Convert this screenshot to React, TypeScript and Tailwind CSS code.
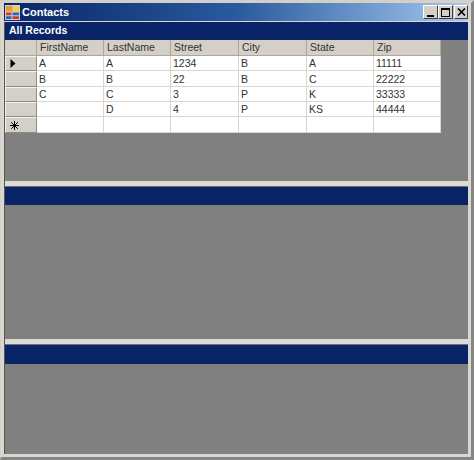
const F = { fontFamily: '"Liberation Sans", Tahoma, sans-serif' };

const columns = ["FirstName", "LastName", "Street", "City", "State", "Zip"];
const widths = ["w-[67px]", "w-[67px]", "w-[68px]", "w-[68px]", "w-[67px]", "w-[67px]"];
const rows = [
  { h: "h-[15px]", c: ["A", "A", "1234", "B", "A", "11111"], mark: "arrow" },
  { h: "h-[16px]", c: ["B", "B", "22", "B", "C", "22222"], mark: "" },
  { h: "h-[15px]", c: ["C", "C", "3", "P", "K", "33333"], mark: "" },
  { h: "h-[15px]", c: ["", "D", "4", "P", "KS", "44444"], mark: "" },
  { h: "h-[16px]", c: ["", "", "", "", "", ""], mark: "star" },
];

function Band({ text, h }: { text?: string; h: string }) {
  return (
    <div className={`${h} bg-[#0a246a] border-b border-[#10254f] flex items-center pl-[4px] text-[10.5px] font-bold text-white shrink-0`}>
      {text}
    </div>
  );
}

function Splitter() {
  return <div className="h-[6px] shrink-0 bg-[#dedbd4] border-b border-b-[#707070]" />;
}

export default function App() {
  return (
    <div className="w-[474px] h-[460px] bg-[#dad7d0] border-t-[3px] border-l border-r-[3px] border-b-[3px] border-t-[#d4d0c8] border-l-[#d4d0c8] border-r-[#858585] border-b-[#858585] flex flex-col overflow-hidden text-[#222]" style={F}>
      <div className="h-[18px] shrink-0 mx-[3px] flex items-center bg-gradient-to-r from-[#0a246a] via-[#2a5a9e] to-[#a6caf0] pl-[1px]">
        <svg width="15" height="15" viewBox="0 0 16 16" className="shrink-0">
          <rect x="0" y="0" width="16" height="16" fill="#d8d4c8" />
          <rect x="1" y="1" width="7" height="6" fill="#e0a030" />
          <rect x="9" y="2" width="6" height="5" fill="#f0d040" />
          <rect x="1" y="8" width="6" height="3" fill="#d04030" />
          <rect x="8" y="8" width="7" height="3" fill="#3060c0" />
          <rect x="1" y="12" width="6" height="3" fill="#3060c0" />
          <rect x="8" y="12" width="7" height="3" fill="#c04040" />
        </svg>
        <span className="ml-[2px] text-[11px] font-bold text-white leading-none">Contacts</span>
        <div className="ml-auto flex items-center">
          {["min", "max"].map((k) => (
            <div key={k} className="w-[15px] h-[14px] bg-[#d4d0c8] border border-t-white border-l-white border-r-[#404040] border-b-[#404040] flex items-center justify-center">
              {k === "min" ? (
                <div className="w-[7px] h-[2px] bg-black mt-[7px] mr-[1px]" />
              ) : (
                <div className="w-[9px] h-[9px] border border-black border-t-2" />
              )}
            </div>
          ))}
          <div className="ml-[1px] w-[14px] h-[14px] bg-[#d4d0c8] border border-t-white border-l-white border-r-[#404040] border-b-[#404040] flex items-center justify-center">
            <svg width="9" height="8" viewBox="0 0 9 8">
              <path d="M1 0.5 L8 7.5 M8 0.5 L1 7.5" stroke="#000" strokeWidth="1.6" />
            </svg>
          </div>
        </div>
      </div>

      <div className="flex-1 mx-[3px] mt-[1px] flex flex-col min-h-0">
        <div className="border-l border-[#555] flex-1 flex flex-col min-h-0">
          <Band text="All Records" h="h-[18px]" />
          <div className="h-[141px] shrink-0 bg-[#808080]">
            <div className="w-[436px] bg-white">
              <div className="flex h-[16px] bg-[#d4d0c8] text-[10.5px] text-[#333]">
                <div className="w-[32px] border-r border-b border-[#aaa79f]" />
                {columns.map((c, i) => (
                  <div key={c} className={`${widths[i]} border-r border-[#aaa79f] border-b pl-[3px] flex items-center`}>
                    {c}
                  </div>
                ))}
              </div>
              {rows.map((r, ri) => (
                <div key={ri} className={`flex ${r.h} text-[10.5px] text-[#333]`}>
                  <div className="w-[32px] bg-[#d4d0c8] border border-t-[#f4f3ef] border-l-[#f4f3ef] border-r-[#8f8c85] border-b-[#8f8c85] flex items-center pl-[4px]">
                    {r.mark === "arrow" && (
                      <svg width="6" height="9" viewBox="0 0 6 9"><path d="M0.5 0 L5.5 4.5 L0.5 9 Z" fill="#000" /></svg>
                    )}
                    {r.mark === "star" && (
                      <svg width="9" height="9" viewBox="0 0 9 9">
                        <path d="M4.5 0 V9 M0 4.5 H9 M1.2 1.2 L7.8 7.8 M7.8 1.2 L1.2 7.8" stroke="#000" strokeWidth="1" />
                      </svg>
                    )}
                  </div>
                  {r.c.map((t, i) => (
                    <div key={i} className={`${widths[i]} border-r border-b border-[#d8d6d0] pl-[2px] pt-[2px] flex items-center`}>
                      {t}
                    </div>
                  ))}
                </div>
              ))}
            </div>
          </div>
          <Splitter />
          <Band h="h-[18px]" />
          <div className="h-[134px] shrink-0 bg-[#808080]" />
          <Splitter />
          <Band h="h-[19px]" />
          <div className="flex-1 bg-[#808080]" />
        </div>
        <div className="h-[3px] shrink-0" />
      </div>
    </div>
  );
}
